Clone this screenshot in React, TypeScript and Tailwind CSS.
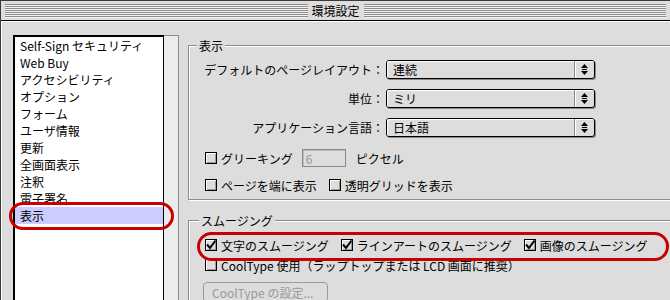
import React from "react";

const items = [
  "Self-Sign セキュリティ",
  "Web Buy",
  "アクセシビリティ",
  "オプション",
  "フォーム",
  "ユーザ情報",
  "更新",
  "全画面表示",
  "注釈",
  "電子署名",
  "表示",
];

function Checkbox({ checked }: { checked?: boolean }) {
  return (
    <span className="flex h-[12px] w-[12px] shrink-0 items-center justify-center border border-black bg-[#dddddd] shadow-[inset_1px_1px_0_#fff,inset_-1px_-1px_0_#9a9a9a]">
      {checked && (
        <svg width="10" height="10" viewBox="0 0 10 10">
          <path d="M1 4.5 L4 8 L9.5 0.5" fill="none" stroke="#000" strokeWidth="2" />
        </svg>
      )}
    </span>
  );
}

function Check({ label, checked }: { label: string; checked?: boolean }) {
  return (
    <div className="flex items-center gap-[4px]">
      <Checkbox checked={checked} />
      <span className="whitespace-nowrap">{label}</span>
    </div>
  );
}

function Popup({ value }: { value: string }) {
  return (
    <div className="flex h-[19px] w-[209px] rounded-[3px] border border-black bg-[#dddddd] shadow-[1px_1px_0_#8a8a8a]">
      <div className="flex flex-1 items-center rounded-l-[2px] pl-[6px] shadow-[inset_1px_1px_0_#fff]">
        {value}
      </div>
      <div className="flex w-[20px] items-center justify-center rounded-r-[2px] border-l border-[#8a8a8a] shadow-[inset_1px_1px_0_#fff]">
        <svg width="7" height="11" viewBox="0 0 7 11">
          <polygon points="0,4 3.5,0 7,4" fill="#000" />
          <rect x="1" y="5" width="5" height="1" fill="#000" />
          <polygon points="0,7 7,7 3.5,11" fill="#000" />
        </svg>
      </div>
    </div>
  );
}

export default function App() {
  const stripes =
    "flex-1 h-[14px] bg-[image:repeating-linear-gradient(to_bottom,#8c8c8c_0px,#8c8c8c_1px,#f2f2f2_1px,#f2f2f2_2px)]";

  return (
    <div className="relative flex h-[300px] w-[670px] flex-col overflow-hidden border-l border-t border-[#3a3a3a] bg-[#dddddd] font-['Noto_Sans_CJK_JP',sans-serif] text-[12px] leading-[13px] text-black">
      {/* title bar */}
      <div className="flex h-[20px] shrink-0 items-center border-b border-black px-[4px]">
        <div className={stripes} />
        <div className="px-[4px]">環境設定</div>
        <div className={stripes} />
      </div>

      {/* body */}
      <div className="flex flex-1 pl-[12px] pt-[14px] shadow-[inset_1px_1px_0_#fff]">
        {/* list */}
        <div className="flex shrink-0">
          <div className="w-[151px] border-l-2 border-r border-t-2 border-black bg-white">
            {items.map((it, i) => (
              <div
                key={it}
                className={
                  "flex h-[17px] items-center whitespace-nowrap pl-[5px] " +
                  (i === items.length - 1 ? "bg-[#ccccff]" : "")
                }
              >
                {it}
              </div>
            ))}
          </div>
          <div className="w-[15px] border-r border-t border-[#8c8c8c] bg-[#ececec]" />
        </div>

        {/* settings */}
        <div className="ml-[9px] mt-[4px] flex flex-col">
          <fieldset className="w-[490px] border border-[#8c8c8c] pb-[7px] shadow-[inset_1px_1px_0_#fff,1px_1px_0_#fff]">
            <legend className="ml-[8px] bg-[#dddddd] px-[2px] leading-[13px]">表示</legend>
            <div className="mt-[8px] grid grid-cols-[195px_209px] gap-x-[2px] gap-y-[10px]">
              <div className="flex items-center justify-end whitespace-nowrap">デフォルトのページレイアウト：</div>
              <Popup value="連続" />
              <div className="flex items-center justify-end whitespace-nowrap">単位：</div>
              <Popup value="ミリ" />
              <div className="flex items-center justify-end whitespace-nowrap">アプリケーション言語：</div>
              <Popup value="日本語" />
            </div>
            <div className="mt-[12px] flex h-[18px] items-center pl-[16px]">
              <Check label="グリーキング" />
              <div className="ml-[9px] flex h-[18px] w-[44px] items-center border border-[#8a8a8a] pl-[3px] text-[#9a9a9a] shadow-[inset_1px_1px_0_#bdbdbd]">
                6
              </div>
              <span className="ml-[10px]">ピクセル</span>
            </div>
            <div className="mt-[11px] flex h-[14px] items-center gap-[12px] pl-[16px]">
              <Check label="ページを端に表示" />
              <Check label="透明グリッドを表示" />
            </div>
          </fieldset>

          <fieldset className="mt-[14px] w-[490px] border border-[#8c8c8c] pb-[10px] shadow-[inset_1px_1px_0_#fff,1px_1px_0_#fff]">
            <legend className="ml-[10px] bg-[#dddddd] px-[2px] leading-[13px]">スムージング</legend>
            <div className="mt-[11px] flex h-[14px] items-center gap-[12px] pl-[16px]">
              <Check label="文字のスムージング" checked />
              <Check label="ラインアートのスムージング" checked />
              <Check label="画像のスムージング" checked />
            </div>
            <div className="mt-[6px] flex h-[14px] items-center pl-[16px]">
              <Check label="CoolType 使用（ラップトップまたは LCD 画面に推奨）" />
            </div>
            <div className="ml-[14px] mt-[10px] flex h-[20px] w-[125px] items-center rounded-[4px] border border-[#9a9a9a] pl-[8px] text-[#9a9a9a]">
              CoolType の設定...
            </div>
          </fieldset>
        </div>
      </div>

      {/* annotation ovals */}
      <div className="absolute left-[8px] top-[201px] h-[28px] w-[165px] rounded-full border-[3px] border-[#c80000]" />
      <div className="absolute left-[196px] top-[231px] h-[29px] w-[472px] rounded-full border-[3px] border-[#c80000]" />
    </div>
  );
}
